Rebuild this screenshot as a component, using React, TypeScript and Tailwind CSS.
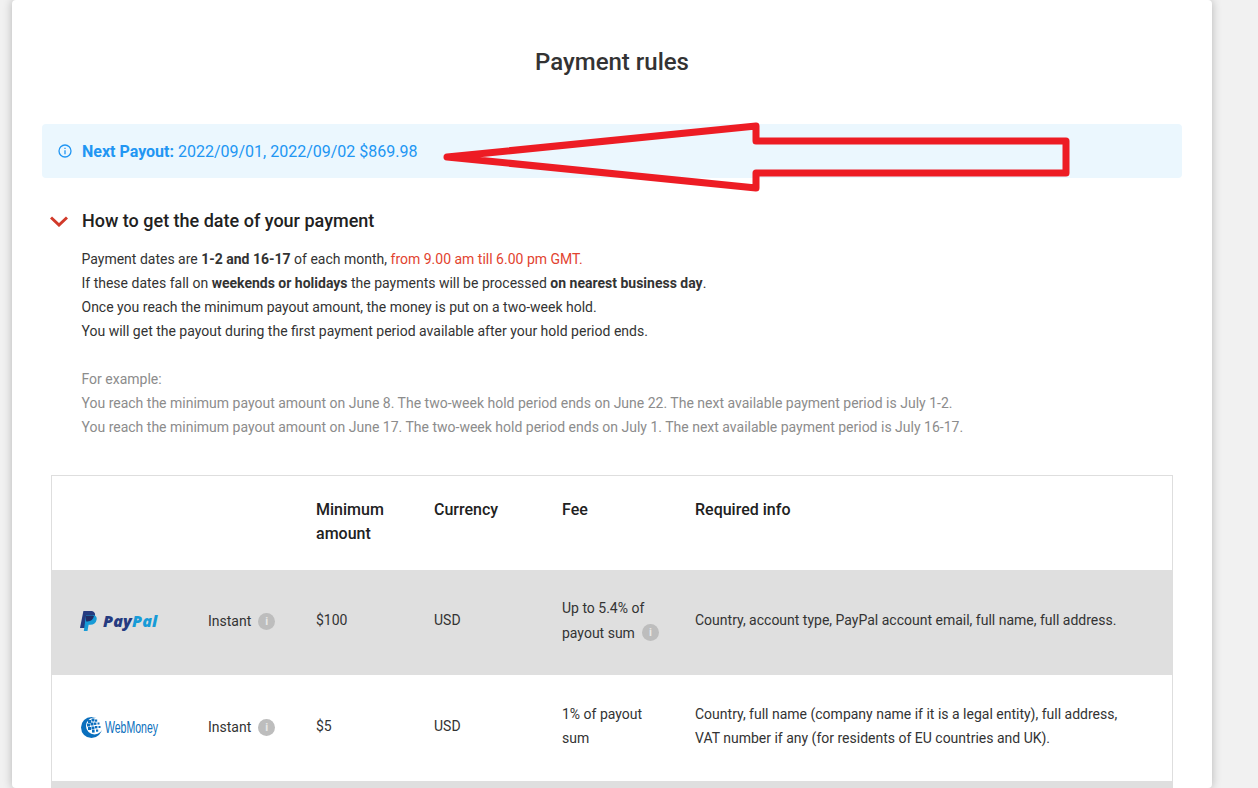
const InfoDot = () => (
  <span className="inline-flex h-[17px] w-[17px] shrink-0 items-center justify-center rounded-full bg-[#bdbdbd] text-[11px] font-bold leading-none text-[#e8e8e8]">
    i
  </span>
);

const PayPalLogo = () => (
  <div className="flex items-center gap-[6px]">
    <svg width="17" height="20" viewBox="0 0 17 20">
      <path d="M3.400 0h7c3.600 0 5.200 2 4.600 5-.7 3.600-3.200 5.400-6.600 5.400H6.200L5 17H0z" fill="#253b80" />
      <path d="M6 4h6.200c3.400 0 5 1.800 4.400 4.700-.6 3.400-3 5.100-6.200 5.100H8.600L7.500 20H3.800z" fill="#179bd7" />
      <path d="M5.500 4.500h6c.6 0 1.500.1 2.500.5-.7 3.600-3 5.400-6.400 5.400H6.200z" fill="#222d65" />
    </svg>
    <span className="font-['Open_Sans',sans-serif] text-[16px] font-extrabold italic leading-none tracking-[0.2px] text-[#253b80]">
      Pay<span className="text-[#179bd7]">Pal</span>
    </span>
  </div>
);

const WebMoneyLogo = () => (
  <div className="flex items-center gap-[3px]">
    <svg width="21" height="21" viewBox="0 0 21 21">
      <circle cx="10.500" cy="10.500" r="10.500" fill="#0a6fbd" />
      <circle cx="13.500" cy="9" r="8.500" fill="#fff" />
      <g fill="#0a6fbd">
        <rect x="7" y="3" width="3" height="3" />
        <rect x="10.500" y="1.500" width="3" height="3" />
        <rect x="14" y="2.500" width="2.200" height="2.200" />
        <rect x="6" y="6.500" width="3" height="3" />
        <rect x="9.500" y="5.500" width="3" height="3" />
        <rect x="13" y="5.500" width="2.400" height="2.400" />
        <rect x="16.500" y="5.500" width="2" height="2" />
        <rect x="7" y="10" width="3" height="3" />
        <rect x="10.500" y="9.500" width="3" height="3" />
        <rect x="14" y="9" width="2.400" height="2.400" />
        <rect x="17.500" y="9" width="2" height="2" />
        <rect x="11" y="13" width="2.600" height="2.600" />
        <rect x="15" y="12.500" width="2.200" height="2.200" />
      </g>
    </svg>
    <span className="w-[55px] origin-left scale-x-[0.62] whitespace-nowrap font-['Liberation_Sans',sans-serif] text-[17px] leading-none text-[#0a6fbd]">
      WebMoney
    </span>
  </div>
);

const columns = "grid grid-cols-[156px_108px_118px_128px_133px_1fr]";

export default function App() {
  return (
    <div className="relative h-[788px] overflow-hidden bg-[#f1f1f1] font-['Roboto',sans-serif] text-[#212121]">
      <div className="ml-3 h-[788px] w-[1200px] rounded-[4px] bg-white px-[30px] pt-[46px] shadow-[0_0_10px_rgba(0,0,0,0.25)]">
        <h1 className="text-center text-[24px] font-medium leading-[32px] text-[#333]">Payment rules</h1>

        <div className="mt-[46px] flex h-[54px] items-center rounded-[4px] bg-[#ebf7fe] pl-[16px] text-[16px] text-[#2196f3]">
          <svg width="14" height="14" viewBox="0 0 14 14" fill="none" stroke="#2196f3" strokeWidth="1.300">
            <circle cx="7" cy="7" r="6" />
            <path d="M7 6.200v4M7 3.800v1.200" />
          </svg>
          <span className="ml-[10px] pt-px">
            <b className="font-bold">Next Payout:</b> 2022/09/01, 2022/09/02 $869.98
          </span>
        </div>

        <div className="mt-[31px] flex items-center">
          <svg className="ml-2" width="18" height="11" viewBox="0 0 18 11" fill="none" stroke="#d13a2a" strokeWidth="3">
            <path d="M1 1.500l8 7.500 8-7.500" />
          </svg>
          <h2 className="ml-[14px] text-[18px] font-medium leading-[24px] text-[#212121]">How to get the date of your payment</h2>
        </div>

        <div className="ml-[39.500px] mt-[14px] text-[14px] leading-[24px] text-[#333]">
          <p>
            Payment dates are <b className="font-bold">1-2 and 16-17</b> of each month,{" "}
            <span className="text-[#e2432f]">from 9.00 am till 6.00 pm GMT.</span>
          </p>
          <p>
            If these dates fall on <b className="font-bold">weekends or holidays</b> the payments will be processed{" "}
            <b className="font-bold">on nearest business day</b>.
          </p>
          <p>Once you reach the minimum payout amount, the money is put on a two-week hold.</p>
          <p>You will get the payout during the first payment period available after your hold period ends.</p>
          <div className="mt-6 text-[#8c8c8c]">
            <p>For example:</p>
            <p>You reach the minimum payout amount on June 8. The two-week hold period ends on June 22. The next available payment period is July 1-2.</p>
            <p>You reach the minimum payout amount on June 17. The two-week hold period ends on July 1. The next available payment period is July 16-17.</p>
          </div>
        </div>

        <div className="ml-[9px] mt-9 w-[1122px] border border-[#dedede] text-[14px] leading-[24px] text-[#333]">
          <div className={`${columns} h-[94px] pt-[22px] text-[16px] font-medium text-[#212121]`}>
            <div />
            <div />
            <div>
              Minimum
              <br />
              amount
            </div>
            <div>Currency</div>
            <div>Fee</div>
            <div>Required info</div>
          </div>

          <div className={`${columns} h-[105px] items-center bg-[#dfdfdf] pb-[5px]`}>
            <div className="pl-[28px] pt-[2px]">
              <PayPalLogo />
            </div>
            <div className="flex items-center gap-[7px] pt-[2px]">
              Instant <InfoDot />
            </div>
            <div>$100</div>
            <div>USD</div>
            <div>
              Up to 5.4% of
              <div className="flex items-center gap-[7px] pt-px">
                payout sum <InfoDot />
              </div>
            </div>
            <div>Country, account type, PayPal account email, full name, full address.</div>
          </div>

          <div className={`${columns} h-[106px] items-center pb-1`}>
            <div className="pl-[29px] pt-[2px]">
              <WebMoneyLogo />
            </div>
            <div className="flex items-center gap-[7px] pt-[2px]">
              Instant <InfoDot />
            </div>
            <div>$5</div>
            <div>USD</div>
            <div>
              1% of payout
              <br />
              sum
            </div>
            <div>
              Country, full name (company name if it is a legal entity), full address,
              <br />
              VAT number if any (for residents of EU countries and UK).
            </div>
          </div>

          <div className="h-[60px] bg-[#dfdfdf]" />
        </div>
      </div>

      {/* hand-drawn arrow pasted over the screenshot */}
      <svg className="absolute left-0 top-0" width="1258" height="788" fill="none">
        <path
          d="M447 157L756 126V141H1066V173H756V188Z"
          stroke="#ed1c24"
          strokeWidth="7"
          strokeLinejoin="round"
        />
      </svg>
    </div>
  );
}
